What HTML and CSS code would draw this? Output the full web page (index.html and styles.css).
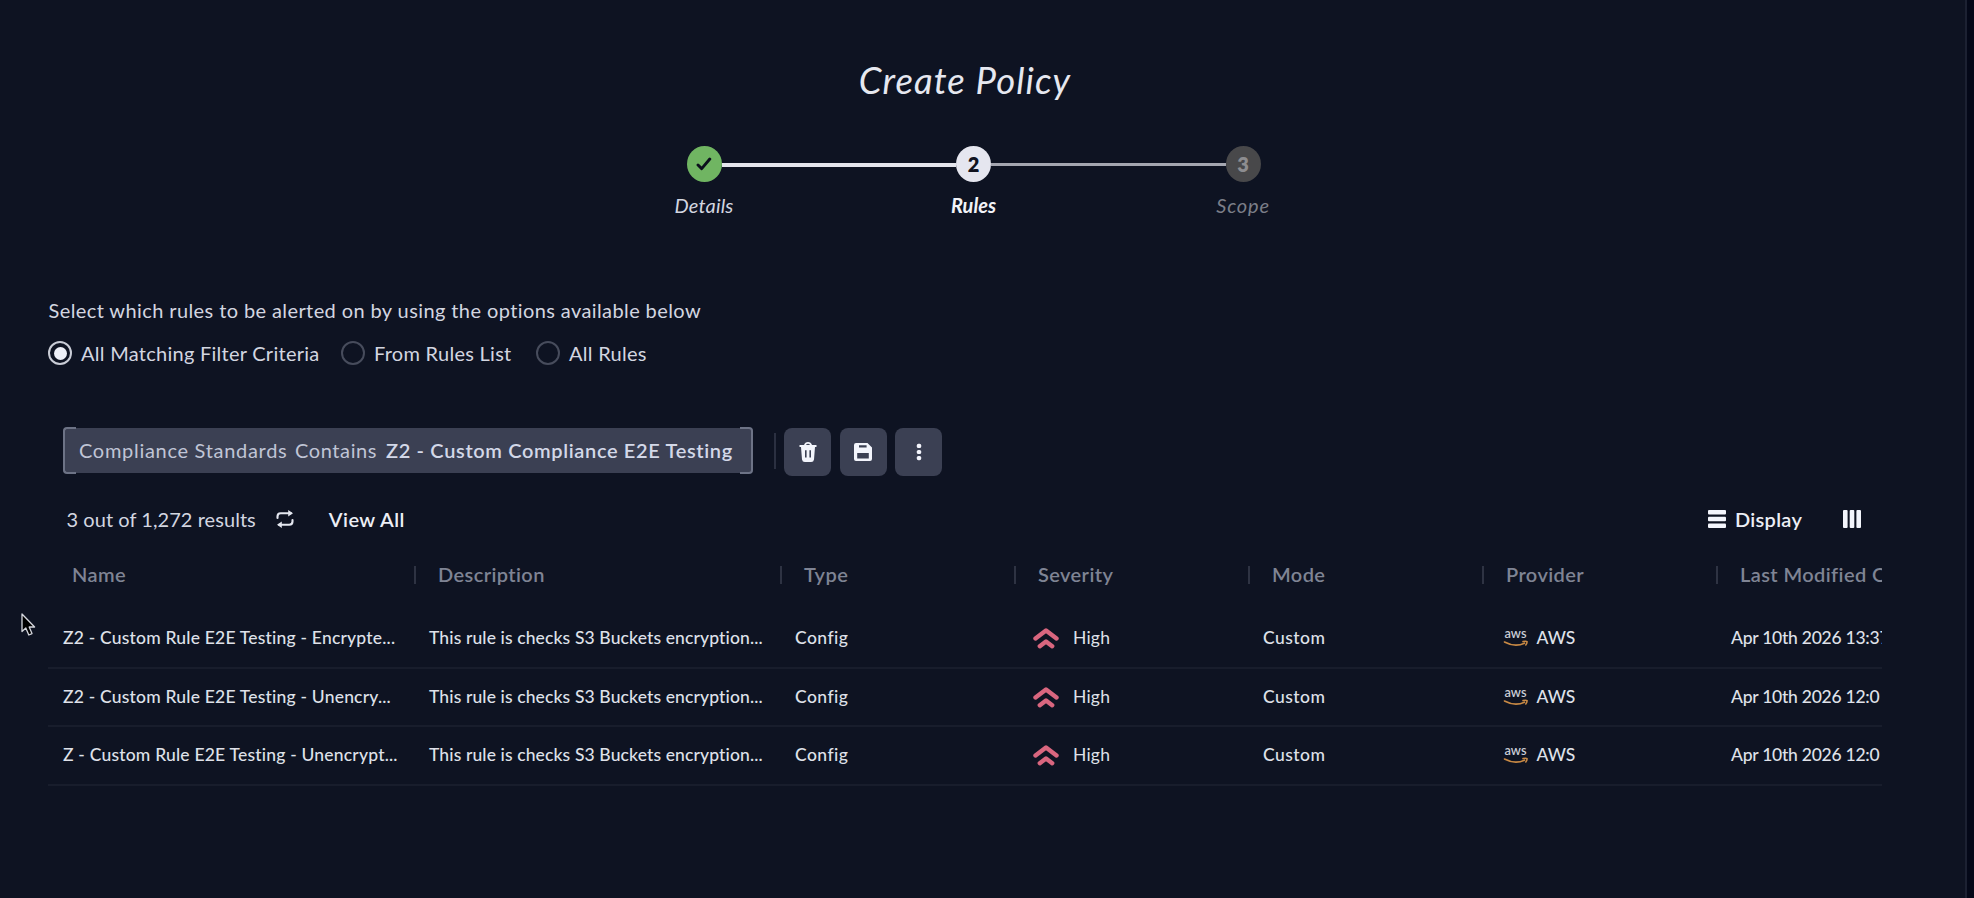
FILE: index.html
```html
<!DOCTYPE html>
<html lang="en">
<head>
  <meta charset="UTF-8">
  <title>Create Policy</title>
  <link rel="stylesheet" href="styles.css">
</head>
<body>

  <div class="page">
    <h1 class="title">Create Policy</h1>

    <div class="stepper">
      <div class="dot done">
        <svg width="16" height="14" viewBox="0 0 16 14"><path d="M2 8 L5.7 11.6 L13.8 2" fill="none" stroke="#0b0f1c" stroke-width="2.9" stroke-linecap="round" stroke-linejoin="round"/></svg>
      </div>
      <div class="line"></div>
      <div class="dot active">2</div>
      <div class="line next"></div>
      <div class="dot pending">3</div>
      <div class="step-label label-details">Details</div>
      <div class="step-label label-rules">Rules</div>
      <div class="step-label label-scope">Scope</div>
    </div>

    <p class="intro">Select which rules to be alerted on by using the options available below</p>

    <div class="radios">
      <label class="radio opt-filter"><span class="circle checked"></span>All Matching Filter Criteria</label>
      <label class="radio opt-list"><span class="circle"></span>From Rules List</label>
      <label class="radio"><span class="circle"></span>All Rules</label>
    </div>

    <div class="filter-bar">
      <div class="chip">
        <span class="chip-field">Compliance Standards</span>
        <span class="chip-op">Contains</span>
        <span class="chip-value">Z2 - Custom Compliance E2E Testing</span>
      </div>
      <div class="divider"></div>
      <div class="btn">
        <svg width="18" height="20" viewBox="0 0 18 20"><path d="M5 3 Q6 0 9 0 Q12 0 13 3 H17.5 V5 H0.5 V3 Z M7 3 H11 Q10.5 1.8 9 1.8 Q7.5 1.8 7 3 Z M2 5 H16 L15 17.5 Q14.6 20 12.2 20 H5.8 Q3.4 20 3 17.5 Z M6 8.2 V15.5 H7.6 V8.2 Z M10.4 8.2 V15.5 H12 V8.2 Z" fill="#f3f5fc" fill-rule="evenodd"/></svg>
      </div>
      <div class="btn">
        <svg width="18" height="18" viewBox="0 0 18 18"><path d="M2 0 H13.5 L18 4.5 V16 Q18 18 16 18 H2 Q0 18 0 16 V2 Q0 0 2 0 Z M5 2.2 V4.6 H12.6 V2.2 Z M3.2 10 V15.4 H14.8 V10 Z" fill="#f3f5fc" fill-rule="evenodd"/></svg>
      </div>
      <div class="btn">
        <svg width="6" height="18" viewBox="0 0 6 18"><g fill="#f3f5fc"><rect x="0.8" y="0.8" width="4.4" height="4.2" rx="1.6"/><rect x="0.8" y="6.9" width="4.4" height="4.2" rx="1.6"/><rect x="0.8" y="13" width="4.4" height="4.2" rx="1.6"/></g></svg>
      </div>
    </div>

    <div class="results">
      <span class="count">3 out of 1,272 results</span>
      <svg class="refresh" width="18" height="18" viewBox="0 0 18 18"><g fill="none" stroke="#e4e7f0" stroke-width="2.1" stroke-linecap="round" stroke-linejoin="round"><path d="M1.5 8 V6.5 Q1.5 3.3 4.7 3.3 H15 M16.5 10 V11.5 Q16.5 14.7 13.3 14.7 H3"/></g><path d="M12.2 0 L17 3.3 L12.2 6.6 Z M5.8 11.4 L1 14.7 L5.8 18 Z" fill="#e4e7f0"/></svg>
      <span class="view-all">View All</span>
      <div class="tools">
        <svg width="18" height="18" viewBox="0 0 18 18"><g fill="#f3f5fc"><rect y="0" width="18" height="4.6" rx="1"/><rect y="6.7" width="18" height="4.6" rx="1"/><rect y="13.4" width="18" height="4.6" rx="1"/></g></svg>
        <span class="display">Display</span>
        <svg width="18" height="18" viewBox="0 0 18 18"><g fill="#f3f5fc"><rect x="0" width="4.6" height="18" rx="1"/><rect x="6.7" width="4.6" height="18" rx="1"/><rect x="13.4" width="4.6" height="18" rx="1"/></g></svg>
      </div>
    </div>

    <div class="table">
      <div class="row head">
        <div>Name</div>
        <div>Description</div>
        <div>Type</div>
        <div>Severity</div>
        <div>Mode</div>
        <div>Provider</div>
        <div>Last Modified On</div>
      </div>
      <div class="row">
        <div class="name">Z2 - Custom Rule E2E Testing - Encrypte...</div>
        <div class="desc">This rule is checks S3 Buckets encryption...</div>
        <div>Config</div>
        <div class="severity">
          <svg width="26" height="22" viewBox="0 0 26 22"><path class="chevron" d="M2.5 11.5 L13 3.5 L23.5 11.5 M6.8 19.2 L13 14.4 L19.2 19.2"/></svg>High
        </div>
        <div>Custom</div>
        <div class="provider">
          <svg width="26" height="20" viewBox="0 0 26 20"><text class="aws-text" x="1.5" y="10" textLength="22" lengthAdjust="spacingAndGlyphs">aws</text><path class="aws-smile" d="M1.5 14 Q12 19.6 21.5 15.2 M20 13.6 Q23 12.8 24 13.6 Q24.2 15.6 22.8 17"/></svg>AWS
        </div>
        <div class="date">Apr 10th 2026 13:37</div>
      </div>
      <div class="row">
        <div class="name">Z2 - Custom Rule E2E Testing - Unencry...</div>
        <div class="desc">This rule is checks S3 Buckets encryption...</div>
        <div>Config</div>
        <div class="severity">
          <svg width="26" height="22" viewBox="0 0 26 22"><path class="chevron" d="M2.5 11.5 L13 3.5 L23.5 11.5 M6.8 19.2 L13 14.4 L19.2 19.2"/></svg>High
        </div>
        <div>Custom</div>
        <div class="provider">
          <svg width="26" height="20" viewBox="0 0 26 20"><text class="aws-text" x="1.5" y="10" textLength="22" lengthAdjust="spacingAndGlyphs">aws</text><path class="aws-smile" d="M1.5 14 Q12 19.6 21.5 15.2 M20 13.6 Q23 12.8 24 13.6 Q24.2 15.6 22.8 17"/></svg>AWS
        </div>
        <div class="date">Apr 10th 2026 12:0</div>
      </div>
      <div class="row">
        <div class="name">Z - Custom Rule E2E Testing - Unencrypt...</div>
        <div class="desc">This rule is checks S3 Buckets encryption...</div>
        <div>Config</div>
        <div class="severity">
          <svg width="26" height="22" viewBox="0 0 26 22"><path class="chevron" d="M2.5 11.5 L13 3.5 L23.5 11.5 M6.8 19.2 L13 14.4 L19.2 19.2"/></svg>High
        </div>
        <div>Custom</div>
        <div class="provider">
          <svg width="26" height="20" viewBox="0 0 26 20"><text class="aws-text" x="1.5" y="10" textLength="22" lengthAdjust="spacingAndGlyphs">aws</text><path class="aws-smile" d="M1.5 14 Q12 19.6 21.5 15.2 M20 13.6 Q23 12.8 24 13.6 Q24.2 15.6 22.8 17"/></svg>AWS
        </div>
        <div class="date">Apr 10th 2026 12:0</div>
      </div>
    </div>
  </div>

  <svg class="cursor" width="15" height="24" viewBox="0 0 15 24"><path d="M1 1 V18.5 L4.8 15 L7.8 22 L11 20.6 L8.2 14 H13.6 Z" fill="#000" stroke="#d5d7de" stroke-width="1.3" stroke-linejoin="round"/></svg>

</body>
</html>
```
FILE: styles.css
```css
* {
  box-sizing: border-box;
}
body {
  margin: 0;
  background: #040818;
  color: #d3d6e0;
  font-family: Lato, "Liberation Sans", sans-serif;
  font-size: 20px;
  line-height: 24px;
  font-variant-ligatures: none;
  white-space: nowrap;
  overflow: hidden;
}
.page {
  width: 1967px;
  height: 898px;
  padding: 58px 83px 0 48px;
  background: #0e1322;
  border-right: 2px solid #1c2132;
}
.title {
  margin: 0;
  text-align: center;
  font-size: 36.5px;
  font-weight: 400;
  font-style: italic;
  line-height: 44px;
  letter-spacing: 1.1px;
  color: #e6e8f0;
}

/* stepper */
.stepper {
  display: grid;
  grid-template-columns: 35px 1fr 35px 1fr 35px;
  align-items: center;
  row-gap: 11px;
  width: 574px;
  margin: 44px 0 0 638.5px;
}
.dot {
  display: flex;
  align-items: center;
  justify-content: center;
  height: 36px;
  border-radius: 50%;
  font-size: 20px;
  font-weight: 800;
}
.done {
  background: #70b562;
}
.active {
  background: #e5e6ef;
  color: #10131f;
}
.pending {
  background: #48484a;
  color: #8d8d90;
}
.line {
  height: 4px;
  margin-top: 1px;
  background: #e4e5ec;
}
.line.next {
  height: 3px;
  background: #a4a6b0;
}
.step-label {
  justify-self: center;
  font-style: italic;
}
.label-details {
  grid-column: 1;
  letter-spacing: 0.15px;
}
.label-rules {
  grid-column: 3;
  font-weight: 700;
  color: #f1f2f7;
}
.label-scope {
  grid-column: 5;
  letter-spacing: 0.8px;
  color: #7b7e88;
}

/* rule options */
.intro {
  margin: 81px 0 0 0.5px;
  letter-spacing: 0.4px;
}
.radios {
  display: flex;
  margin-top: 19px;
  letter-spacing: 0.27px;
}
.radio {
  display: flex;
  align-items: center;
  gap: 9px;
}
.opt-filter {
  width: 293px;
}
.opt-list {
  width: 195px;
}
.circle {
  display: flex;
  align-items: center;
  justify-content: center;
  width: 24px;
  height: 24px;
  border: 2px solid #474c5c;
  border-radius: 50%;
}
.circle.checked {
  border-color: #c9ccd6;
}
.circle.checked::after {
  content: "";
  width: 13px;
  height: 13px;
  border-radius: 50%;
  background: #eef0f8;
}

/* filter bar */
.filter-bar {
  display: flex;
  height: 48px;
  margin: 63px 0 0 15px;
}
.chip {
  position: relative;
  display: flex;
  align-items: center;
  width: 690px;
  height: 45px;
  padding: 0 0 2px 16px;
  background: #3b4053;
  border-radius: 4px;
}
.chip::before, .chip::after {
  content: "";
  position: absolute;
  top: -1px;
  bottom: -1px;
  width: 11px;
  border: 2px solid #6d7386;
}
.chip::before {
  left: 0;
  border-right: 0;
  border-radius: 4px 0 0 4px;
}
.chip::after {
  right: 0;
  border-left: 0;
  border-radius: 0 4px 4px 0;
}
.chip-field {
  width: 216px;
  letter-spacing: 0.7px;
  color: #c0c5d6;
}
.chip-op {
  width: 91px;
  letter-spacing: 0.6px;
  color: #c0c5d6;
}
.chip-value {
  font-weight: 600;
  letter-spacing: 0.65px;
  color: #d3d8e8;
}
.divider {
  width: 2px;
  height: 36px;
  margin: 5px 8px 0 21px;
  background: #2b3041;
}
.btn {
  display: flex;
  align-items: center;
  justify-content: center;
  width: 47px;
  margin-right: 8.5px;
  background: #3b4053;
  border-radius: 8px;
}

/* results line */
.results {
  display: flex;
  align-items: center;
  margin-top: 31px;
  padding: 0 21px 0 18.5px;
}
.count {
  letter-spacing: 0.05px;
}
.refresh {
  margin: 0 35px 0 20px;
}
.view-all {
  font-weight: 600;
  letter-spacing: 0.45px;
  color: #eceef5;
}
.tools {
  display: flex;
  align-items: center;
  margin-left: auto;
}
.display {
  width: 108px;
  margin-left: 9px;
  font-weight: 600;
  letter-spacing: 0.3px;
  color: #eceef5;
}

/* table */
.table {
  margin-top: 22px;
  overflow: hidden;
}
.row {
  display: grid;
  grid-template-columns: 366px 366px 234px 234px 234px 234px 166px;
  align-items: center;
  height: 58.6px;
  border-bottom: 2px solid #181d2c;
  font-size: 17.5px;
  font-weight: 500;
  letter-spacing: 0.45px;
  color: #dfe1e9;
}
.row > div {
  padding-left: 15px;
  overflow: hidden;
}
.head {
  height: 57px;
  padding-bottom: 14px;
  border: 0;
  font-size: 20px;
  font-weight: 600;
  letter-spacing: 0.4px;
  color: #7f8494;
}
.head > div {
  height: 18px;
  padding-left: 22px;
  border-left: 2px solid #2e3343;
  line-height: 16px;
  overflow: visible;
}
.head > div:first-child {
  padding-left: 22px;
  border-color: transparent;
}
.row .name {
  letter-spacing: 0.2px;
}
.row .desc {
  letter-spacing: 0.12px;
}
.row .severity {
  display: flex;
  align-items: center;
  gap: 14px;
  padding-left: 19px;
  font-weight: 400;
  letter-spacing: 0.2px;
}
.row .provider {
  display: flex;
  align-items: center;
  gap: 8px;
  padding-left: 20.5px;
  letter-spacing: 0;
}
.row .date {
  letter-spacing: -0.25px;
}
.chevron {
  fill: none;
  stroke: #d9667f;
  stroke-width: 4.4;
  stroke-linecap: round;
  stroke-linejoin: round;
}
.aws-text {
  font-size: 13px;
  font-weight: 600;
  fill: #c9ccd6;
}
.aws-smile {
  fill: none;
  stroke: #c98a45;
  stroke-width: 1.6;
  stroke-linecap: round;
}

.cursor {
  position: absolute;
  left: 21px;
  top: 613px;
}
```
